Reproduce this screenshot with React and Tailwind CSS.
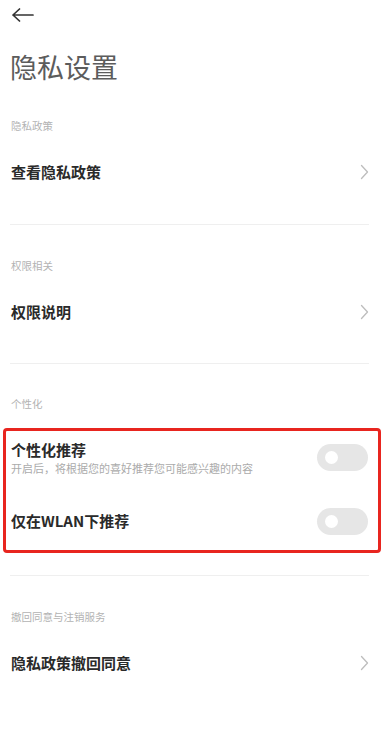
const font = { fontFamily: '"Noto Sans CJK SC", "Noto Sans", sans-serif' }

const Chevron = () => (
  <svg width="9" height="16" viewBox="0 0 9 16" fill="none">
    <polyline points="1.5,1.5 7.5,8 1.5,14.5" stroke="#bdbdbd" strokeWidth="1.3" strokeLinecap="round" strokeLinejoin="round" />
  </svg>
)

const Toggle = () => (
  <div className="w-[51px] h-[27px] rounded-full bg-[#e6e6e6] flex items-center pl-[8px]">
    <div className="w-[13px] h-[13px] rounded-full bg-white" />
  </div>
)

const Label = ({ children }) => (
  <div className="h-[20px] flex items-center pl-[11px] text-[10.5px] text-[#b3b3b3]">{children}</div>
)

const LinkRow = ({ children }) => (
  <div className="mt-[12px] h-[48px] flex items-center justify-between pl-[11px] pr-[20px]">
    <span className="text-[15px] font-bold text-[#2a2a2a]">{children}</span>
    <Chevron />
  </div>
)

const Divider = () => <div className="mx-[10px] mr-[20px] h-px bg-[#efefef]" />

export default function App() {
  return (
    <div className="w-[389px] h-[729px] bg-white overflow-hidden" style={font}>
      {/* Header */}
      <div className="h-[30px] flex items-center pl-[12px]">
        <svg width="22" height="14" viewBox="0 0 22 14" fill="none">
          <path d="M1 7H21M1 7L7.5 1M1 7L7.5 13" stroke="#333" strokeWidth="1.7" strokeLinecap="round" strokeLinejoin="round" />
        </svg>
      </div>
      <div className="h-[74px] flex items-center pl-[10px] text-[27px] text-[#5c5c5c]">隐私设置</div>

      {/* 隐私政策 */}
      <div className="mt-[12px]">
        <Label>隐私政策</Label>
        <LinkRow>查看隐私政策</LinkRow>
      </div>
      <div className="mt-[28px]"><Divider /></div>

      {/* 权限相关 */}
      <div className="mt-[31px]">
        <Label>权限相关</Label>
        <LinkRow>权限说明</LinkRow>
      </div>
      <div className="mt-[27px]"><Divider /></div>

      {/* 个性化 */}
      <div className="mt-[30px]">
        <Label>个性化</Label>
      </div>
      <div className="mt-[14px] mx-[3px] w-[378px] border-[3px] border-[#e8251f] rounded-[4px] pl-[5px] pr-[10px] pt-[9px] pb-[9px]">
        <div className="flex items-center justify-between">
          <div>
            <div className="text-[15px] leading-[20px] font-bold text-[#2a2a2a]">个性化推荐</div>
            <div className="mt-[1px] text-[11px] leading-[14px] text-[#ababab]">开启后，将根据您的喜好推荐您可能感兴趣的内容</div>
          </div>
          <Toggle />
        </div>
        <div className="mt-[26px] h-[40px] flex items-center justify-between">
          <span className="text-[15px] font-bold text-[#2a2a2a]">仅在WLAN下推荐</span>
          <Toggle />
        </div>
      </div>
      <div className="mt-[22px]"><Divider /></div>

      {/* 撤回同意与注销服务 */}
      <div className="mt-[31px]">
        <Label>撤回同意与注销服务</Label>
        <LinkRow>隐私政策撤回同意</LinkRow>
      </div>
    </div>
  )
}
